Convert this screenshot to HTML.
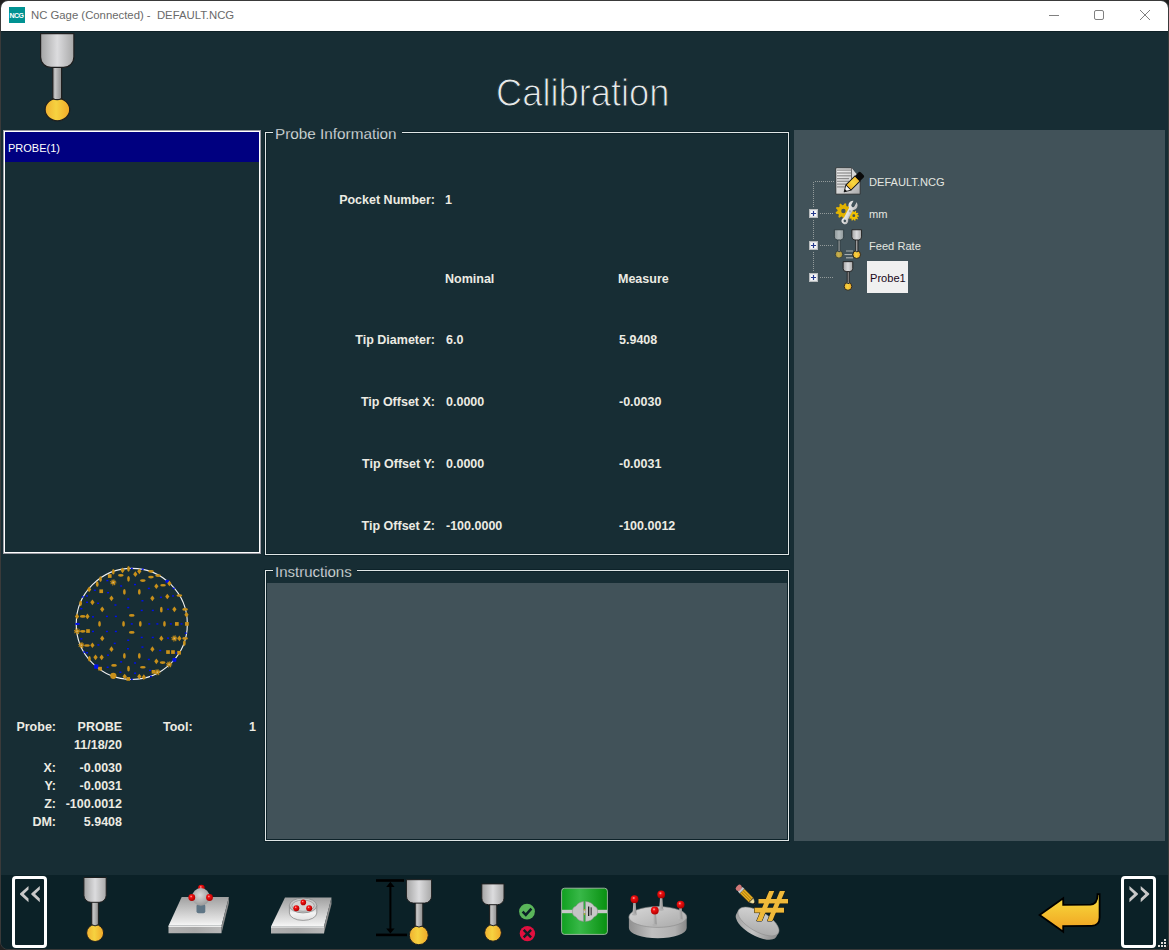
<!DOCTYPE html>
<html><head><meta charset="utf-8">
<style>
*{margin:0;padding:0;box-sizing:border-box}
html,body{width:1169px;height:950px;overflow:hidden;background:#202020}
body{position:relative;font-family:"Liberation Sans",sans-serif}
.a{position:absolute}
svg{position:absolute;overflow:visible}
#win{position:absolute;left:0;top:0;width:1169px;height:950px;background:#172d34;border:1px solid #3a3a3a;border-radius:8px;overflow:hidden}
#title{position:absolute;left:0;top:0;width:1167px;height:30px;background:#fff}
.t{position:absolute;white-space:nowrap;line-height:1}
.b{font-weight:bold;font-size:12.5px;color:#ecebe3}
.r{text-align:right}
.tr{font-size:11.5px;color:#e4e6e0;transform:scaleX(0.965);transform-origin:0 0}
</style></head><body>
<div id="win">
<div id="title">
  <div class="a" style="left:8px;top:6px;width:16px;height:16px;background:#009292;color:#fff;font:bold 7px 'Liberation Sans',sans-serif;text-align:center;line-height:18px;letter-spacing:-0.6px;text-indent:-1px">NCG</div>
  <div class="t" style="left:30px;top:9px;font-size:11.5px;color:#6a6a6a;transform:scaleX(0.985);transform-origin:0 0">NC Gage (Connected) -&nbsp; DEFAULT.NCG</div>
  <svg style="left:-1px;top:-1px" width="1167" height="30">
   <line x1="1049" y1="15.5" x2="1059" y2="15.5" stroke="#808080" stroke-width="1"/>
   <rect x="1094.5" y="10.5" width="9" height="9" rx="1.5" fill="none" stroke="#808080" stroke-width="1"/>
   <path d="M1140 10 L1150 20 M1150 10 L1140 20" stroke="#808080" stroke-width="1"/>
  </svg>
 </div>
 <div class="a" style="left:0;top:30px;width:1167px;height:1px;background:#0e2026"></div>
<div class="t" style="left:495px;top:73px;font-size:38px;color:#e6eaea;-webkit-text-stroke:1px #172d34;transform:scaleX(0.955);transform-origin:0 0">Calibration</div>
<svg style="left:-1px;top:-1px" width="1" height="1">
 <defs>
  <linearGradient id="ph1" x1="0" x2="1" y1="0" y2="0"><stop offset="0" stop-color="#a4a4a4"/><stop offset="0.5" stop-color="#dcdcde"/><stop offset="1" stop-color="#a8a8a8"/></linearGradient>
  <linearGradient id="ps1" x1="0" x2="1" y1="0" y2="0"><stop offset="0" stop-color="#a4a4a4"/><stop offset="0.3" stop-color="#c4c4c4"/><stop offset="1" stop-color="#8c8c8c"/></linearGradient>
  <linearGradient id="pb1" x1="0" x2="1" y1="0" y2="0"><stop offset="0" stop-color="#f0b030"/><stop offset="0.45" stop-color="#f6d240"/><stop offset="1" stop-color="#f0a828"/></linearGradient>
 </defs>
 <ellipse cx="57.4" cy="109.6" rx="12.3" ry="11.200000000000001" fill="url(#pb1)" stroke="#1e1e1e" stroke-width="1.2"/>
 <path d="M52.800000000000004 66 L61.6 66 L61.6 98.39999999999999 Q57.2 101.0 52.800000000000004 98.39999999999999 Z" fill="url(#ps1)" stroke="#1e1e1e" stroke-width="1.2"/>
 <path d="M40.6 33.6 L73.9 33.6 L73.9 57 A10.4 10.4 0 0 1 63.5 67.4 L51 67.4 A10.4 10.4 0 0 1 40.6 57 Z" fill="url(#ph1)" stroke="#1e1e1e" stroke-width="1.2"/>
</svg>
<div class="a" style="left:2px;top:129px;width:258px;height:424px;border:1px solid #9c9ca4"></div><div class="a" style="left:3px;top:130px;width:256px;height:422px;border:1px solid #fff"></div>
 <div class="a" style="left:4px;top:131px;width:254px;height:30px;background:#000080"></div>
 <div class="t" style="left:7px;top:142px;font-size:11px;color:#fff">PROBE(1)</div>
<div class="a" style="left:264px;top:131px;width:524px;height:423px;border:1px solid #e0e6e6;box-shadow:0 0 0 1px #0d2229, inset 0 0 0 1px #0d2229"></div>
 <div class="a" style="left:272px;top:122px;width:129px;height:16px;background:#172d34"></div>
 <div class="t" style="left:274px;top:125px;font-size:15.3px;color:#e6ecec;-webkit-text-stroke:0.25px #172d34">Probe Information</div>
 <div class="a" style="left:264px;top:569px;width:524px;height:271px;border:1px solid #e0e6e6;box-shadow:0 0 0 1px #0d2229, inset 0 0 0 1px #0d2229"></div>
 <div class="a" style="left:266px;top:582px;width:520px;height:256px;background:#415259"></div>
 <div class="a" style="left:272px;top:562px;width:84px;height:16px;background:#172d34"></div>
 <div class="t" style="left:274px;top:563px;font-size:15px;color:#e6ecec;-webkit-text-stroke:0.25px #172d34">Instructions</div>
 <div class="a" style="left:793px;top:129px;width:371px;height:711px;background:#415259"></div>
<div class="t b r" style="left:134px;width:300px;top:193px;">Pocket Number:</div>
<div class="t b" style="left:444px;top:193px;">1</div>
<div class="t b" style="left:444px;top:272px;">Nominal</div>
<div class="t b" style="left:617px;top:272px;">Measure</div>
<div class="t b r" style="left:134px;width:300px;top:333px;">Tip Diameter:</div>
<div class="t b" style="left:445px;top:333px;">6.0</div>
<div class="t b" style="left:618px;top:333px;">5.9408</div>
<div class="t b r" style="left:134px;width:300px;top:395px;">Tip Offset X:</div>
<div class="t b" style="left:445px;top:395px;">0.0000</div>
<div class="t b" style="left:618px;top:395px;">-0.0030</div>
<div class="t b r" style="left:134px;width:300px;top:457px;">Tip Offset Y:</div>
<div class="t b" style="left:445px;top:457px;">0.0000</div>
<div class="t b" style="left:618px;top:457px;">-0.0031</div>
<div class="t b r" style="left:134px;width:300px;top:519px;">Tip Offset Z:</div>
<div class="t b" style="left:445px;top:519px;">-100.0000</div>
<div class="t b" style="left:618px;top:519px;">-100.0012</div>
<div class="t b r" style="left:-245px;width:300px;top:720px;">Probe:</div>
<div class="t b r" style="left:-179px;width:300px;top:720px;">PROBE</div>
<div class="t b" style="left:162px;top:720px;">Tool:</div>
<div class="t b r" style="left:-45px;width:300px;top:720px;">1</div>
<div class="t b r" style="left:-179px;width:300px;top:738px;">11/18/20</div>
<div class="t b r" style="left:-245px;width:300px;top:761px;">X:</div>
<div class="t b r" style="left:-179px;width:300px;top:761px;">-0.0030</div>
<div class="t b r" style="left:-245px;width:300px;top:779px;">Y:</div>
<div class="t b r" style="left:-179px;width:300px;top:779px;">-0.0031</div>
<div class="t b r" style="left:-245px;width:300px;top:797px;">Z:</div>
<div class="t b r" style="left:-179px;width:300px;top:797px;">-100.0012</div>
<div class="t b r" style="left:-245px;width:300px;top:815px;">DM:</div>
<div class="t b r" style="left:-179px;width:300px;top:815px;">5.9408</div>
<svg style="left:-1px;top:-1px" width="1" height="1">
 <g fill="#939b9b"><rect x="813" y="182" width="1" height="1"/><rect x="813" y="184" width="1" height="1"/><rect x="813" y="186" width="1" height="1"/><rect x="813" y="188" width="1" height="1"/><rect x="813" y="190" width="1" height="1"/><rect x="813" y="192" width="1" height="1"/><rect x="813" y="194" width="1" height="1"/><rect x="813" y="196" width="1" height="1"/><rect x="813" y="198" width="1" height="1"/><rect x="813" y="200" width="1" height="1"/><rect x="813" y="202" width="1" height="1"/><rect x="813" y="204" width="1" height="1"/><rect x="813" y="206" width="1" height="1"/><rect x="813" y="220" width="1" height="1"/><rect x="813" y="222" width="1" height="1"/><rect x="813" y="224" width="1" height="1"/><rect x="813" y="226" width="1" height="1"/><rect x="813" y="228" width="1" height="1"/><rect x="813" y="230" width="1" height="1"/><rect x="813" y="232" width="1" height="1"/><rect x="813" y="234" width="1" height="1"/><rect x="813" y="236" width="1" height="1"/><rect x="813" y="238" width="1" height="1"/><rect x="813" y="252" width="1" height="1"/><rect x="813" y="254" width="1" height="1"/><rect x="813" y="256" width="1" height="1"/><rect x="813" y="258" width="1" height="1"/><rect x="813" y="260" width="1" height="1"/><rect x="813" y="262" width="1" height="1"/><rect x="813" y="264" width="1" height="1"/><rect x="813" y="266" width="1" height="1"/><rect x="813" y="268" width="1" height="1"/><rect x="813" y="270" width="1" height="1"/><rect x="815" y="181" width="1" height="1"/><rect x="817" y="181" width="1" height="1"/><rect x="819" y="181" width="1" height="1"/><rect x="821" y="181" width="1" height="1"/><rect x="823" y="181" width="1" height="1"/><rect x="825" y="181" width="1" height="1"/><rect x="827" y="181" width="1" height="1"/><rect x="829" y="181" width="1" height="1"/><rect x="831" y="181" width="1" height="1"/><rect x="833" y="181" width="1" height="1"/><rect x="820" y="213" width="1" height="1"/><rect x="822" y="213" width="1" height="1"/><rect x="824" y="213" width="1" height="1"/><rect x="826" y="213" width="1" height="1"/><rect x="828" y="213" width="1" height="1"/><rect x="830" y="213" width="1" height="1"/><rect x="832" y="213" width="1" height="1"/><rect x="820" y="245" width="1" height="1"/><rect x="822" y="245" width="1" height="1"/><rect x="824" y="245" width="1" height="1"/><rect x="826" y="245" width="1" height="1"/><rect x="828" y="245" width="1" height="1"/><rect x="830" y="245" width="1" height="1"/><rect x="832" y="245" width="1" height="1"/><rect x="820" y="277" width="1" height="1"/><rect x="822" y="277" width="1" height="1"/><rect x="824" y="277" width="1" height="1"/><rect x="826" y="277" width="1" height="1"/><rect x="828" y="277" width="1" height="1"/><rect x="830" y="277" width="1" height="1"/><rect x="832" y="277" width="1" height="1"/></g>
 <rect x="809.5" y="209.5" width="8" height="8" fill="#fafafa" stroke="#b8bcbe" stroke-width="1"/>
 <rect x="810.5" y="210.5" width="6" height="6" fill="none" stroke="#e6e8ea" stroke-width="1"/>
 <path d="M811 213.5 L816 213.5 M813.5 211 L813.5 216" stroke="#23388c" stroke-width="1.2"/>
<rect x="809.5" y="241.5" width="8" height="8" fill="#fafafa" stroke="#b8bcbe" stroke-width="1"/>
 <rect x="810.5" y="242.5" width="6" height="6" fill="none" stroke="#e6e8ea" stroke-width="1"/>
 <path d="M811 245.5 L816 245.5 M813.5 243 L813.5 248" stroke="#23388c" stroke-width="1.2"/>
<rect x="809.5" y="273.5" width="8" height="8" fill="#fafafa" stroke="#b8bcbe" stroke-width="1"/>
 <rect x="810.5" y="274.5" width="6" height="6" fill="none" stroke="#e6e8ea" stroke-width="1"/>
 <path d="M811 277.5 L816 277.5 M813.5 275 L813.5 280" stroke="#23388c" stroke-width="1.2"/>

</svg>
<svg style="left:-1px;top:-1px" width="1" height="1">
 <defs><linearGradient id="doc" x1="0" x2="1" y1="0" y2="1"><stop offset="0" stop-color="#f4f4f4"/><stop offset="0.6" stop-color="#d0d0d0"/><stop offset="1" stop-color="#a8a8a8"/></linearGradient>
 <linearGradient id="pen" x1="0" x2="1" y1="0" y2="0"><stop offset="0" stop-color="#f0b020"/><stop offset="0.5" stop-color="#f8d840"/><stop offset="1" stop-color="#f0b830"/></linearGradient></defs>
 <path d="M835.8 167.8 L851.5 167.8 L860.2 178.5 L860.2 194.2 L835.8 194.2 Z" fill="url(#doc)" stroke="#2e3436" stroke-width="1"/>
 <path d="M851.5 167.8 L851.5 178.5 L860.2 178.5" fill="#d8d8d8" stroke="#505050" stroke-width="0.8"/>
 <rect x="837" y="169.5" width="14" height="1.2" fill="#8c8c8c"/><rect x="837" y="172.4" width="14" height="1.2" fill="#8c8c8c"/><rect x="837" y="175.2" width="14" height="1.2" fill="#8c8c8c"/><rect x="837" y="178" width="12" height="1.2" fill="#8c8c8c"/><rect x="837" y="180.7" width="12" height="1.2" fill="#8c8c8c"/><rect x="837" y="183.5" width="12" height="1.2" fill="#8c8c8c"/><rect x="837" y="186.3" width="12" height="1.2" fill="#8c8c8c"/>
 <g transform="translate(853 183) rotate(-45)">
  <rect x="-6.5" y="-3.6" width="13" height="7.2" fill="url(#pen)" stroke="#111" stroke-width="1"/>
  <rect x="6" y="-3.6" width="7" height="7.2" rx="1.5" fill="#0a0a0a"/>
  <path d="M-6.5 -3.6 L-12.5 0 L-6.5 3.6 Z" fill="#f4f4f4" stroke="#111" stroke-width="0.8"/>
  <path d="M-10 -1.5 L-13 0 L-10 1.5 Z" fill="#111"/>
 </g>
</svg>
<svg style="left:-1px;top:-1px" width="1" height="1">
 <path d="M851.30,211.00 L851.18,212.37 L848.94,213.02 L848.51,213.95 L849.45,216.08 L848.48,217.05 L846.35,216.11 L845.42,216.54 L844.77,218.78 L843.40,218.90 L842.38,216.81 L841.38,216.54 L839.45,217.84 L838.32,217.05 L838.88,214.79 L838.29,213.95 L835.98,213.70 L835.62,212.37 L837.50,211.00 L837.59,209.98 L835.98,208.30 L836.56,207.05 L838.88,207.21 L839.61,206.48 L839.45,204.16 L840.70,203.58 L842.38,205.19 L843.40,205.10 L844.77,203.22 L846.10,203.58 L846.35,205.89 L847.19,206.48 L849.45,205.92 L850.24,207.05 L848.94,208.98 L849.21,209.98 Z M845.6 211 A2.2 2.2 0 1 0 841.1999999999999 211 A2.2 2.2 0 1 0 845.6 211 Z" fill="#e2b300" fill-rule="evenodd"/>
 <path d="M859.00,215.70 L858.94,216.51 L857.41,216.87 L857.19,217.43 L858.01,218.76 L857.48,219.38 L856.03,218.77 L855.53,219.09 L855.41,220.65 L854.61,220.84 L853.80,219.50 L853.21,219.45 L852.19,220.65 L851.44,220.33 L851.57,218.77 L851.11,218.39 L849.59,218.76 L849.17,218.06 L850.19,216.87 L850.05,216.29 L848.60,215.70 L848.66,214.89 L850.19,214.53 L850.41,213.97 L849.59,212.64 L850.12,212.02 L851.57,212.63 L852.07,212.31 L852.19,210.75 L852.99,210.56 L853.80,211.90 L854.39,211.95 L855.41,210.75 L856.16,211.07 L856.03,212.63 L856.49,213.01 L858.01,212.64 L858.43,213.34 L857.41,214.53 L857.55,215.11 Z M855.1999999999999 215.7 A1.4 1.4 0 1 0 852.4 215.7 A1.4 1.4 0 1 0 855.1999999999999 215.7 Z" fill="#f0c000" fill-rule="evenodd"/>
 <defs><linearGradient id="wr" x1="0" x2="1" y1="0" y2="0"><stop offset="0" stop-color="#e4e4e4"/><stop offset="0.6" stop-color="#d8d8d8"/><stop offset="1" stop-color="#b8b8b8"/></linearGradient></defs>
 <g transform="translate(849 213) rotate(27.7)">
  <rect x="-2.3" y="-6" width="4.6" height="15" fill="url(#wr)"/>
  <circle cx="0" cy="8.9" r="3.3" fill="url(#wr)"/>
  <circle cx="0" cy="9" r="1.3" fill="#415259"/>
  <circle cx="0" cy="-8.6" r="4.6" fill="url(#wr)"/>
  <path d="M-1.7 -14 L1.7 -14 L1.7 -8.6 A1.7 1.7 0 0 1 -1.7 -8.6 Z" fill="#415259"/>
  <circle cx="0" cy="-2" r="1.1" fill="#a8a8a8"/>
 </g>
</svg>
<svg style="left:-1px;top:-1px" width="1" height="1">
 <defs>
  <linearGradient id="ph2" x1="0" x2="1" y1="0" y2="0"><stop offset="0" stop-color="#8e9799"/><stop offset="0.5" stop-color="#b4bcbe"/><stop offset="1" stop-color="#8e9799"/></linearGradient>
  <linearGradient id="ps2" x1="0" x2="1" y1="0" y2="0"><stop offset="0" stop-color="#8e9799"/><stop offset="0.3" stop-color="#a8b0b2"/><stop offset="1" stop-color="#8c8c8c"/></linearGradient>
  <linearGradient id="pb2" x1="0" x2="1" y1="0" y2="0"><stop offset="0" stop-color="#b09838"/><stop offset="0.45" stop-color="#c8b050"/><stop offset="1" stop-color="#a89030"/></linearGradient>
 </defs>
 <ellipse cx="839" cy="254.4" rx="3.75" ry="3.75" fill="url(#pb2)" stroke="#2d3a3e" stroke-width="0.9"/>
 <path d="M838.0500000000001 238.4 L840.15 238.4 L840.15 250.8 Q839.1 253.4 838.0500000000001 250.8 Z" fill="url(#ps2)" stroke="#2d3a3e" stroke-width="0.9"/>
 <path d="M834.35 229.75 L843.65 229.75 L843.65 236.9 A3.05 3.05 0 0 1 840.6 239.95000000000002 L837.4 239.95000000000002 A3.05 3.05 0 0 1 834.35 236.9 Z" fill="url(#ph2)" stroke="#2d3a3e" stroke-width="0.9"/>
</svg>
<svg style="left:-1px;top:-1px" width="1" height="1">
 <defs>
  <linearGradient id="ph3" x1="0" x2="1" y1="0" y2="0"><stop offset="0" stop-color="#a4a4a4"/><stop offset="0.5" stop-color="#dcdcde"/><stop offset="1" stop-color="#a8a8a8"/></linearGradient>
  <linearGradient id="ps3" x1="0" x2="1" y1="0" y2="0"><stop offset="0" stop-color="#a4a4a4"/><stop offset="0.3" stop-color="#c4c4c4"/><stop offset="1" stop-color="#8c8c8c"/></linearGradient>
  <linearGradient id="pb3" x1="0" x2="1" y1="0" y2="0"><stop offset="0" stop-color="#f0b030"/><stop offset="0.45" stop-color="#f6d240"/><stop offset="1" stop-color="#f0a828"/></linearGradient>
 </defs>
 <ellipse cx="856.7" cy="254.6" rx="3.8499999999999996" ry="3.8499999999999996" fill="url(#pb3)" stroke="#1e1e1e" stroke-width="0.9"/>
 <path d="M855.75 238.4 L857.9499999999999 238.4 L857.9499999999999 250.89999999999998 Q856.8499999999999 253.49999999999997 855.75 250.89999999999998 Z" fill="url(#ps3)" stroke="#1e1e1e" stroke-width="0.9"/>
 <path d="M851.85 229.75 L861.55 229.75 L861.55 236.9 A3.05 3.05 0 0 1 858.5 239.95000000000002 L854.9 239.95000000000002 A3.05 3.05 0 0 1 851.85 236.9 Z" fill="url(#ph3)" stroke="#1e1e1e" stroke-width="0.9"/>
</svg>
<svg style="left:-1px;top:-1px" width="1" height="1"><g stroke="#a9b0b0" stroke-width="1.2">
 <line x1="846" y1="251" x2="853" y2="251"/><line x1="844.5" y1="254.5" x2="852" y2="254.5"/><line x1="846" y1="257.8" x2="853" y2="257.8"/></g></svg>
<svg style="left:-1px;top:-1px" width="1" height="1">
 <defs>
  <linearGradient id="ph4" x1="0" x2="1" y1="0" y2="0"><stop offset="0" stop-color="#a4a4a4"/><stop offset="0.5" stop-color="#dcdcde"/><stop offset="1" stop-color="#a8a8a8"/></linearGradient>
  <linearGradient id="ps4" x1="0" x2="1" y1="0" y2="0"><stop offset="0" stop-color="#a4a4a4"/><stop offset="0.3" stop-color="#c4c4c4"/><stop offset="1" stop-color="#8c8c8c"/></linearGradient>
  <linearGradient id="pb4" x1="0" x2="1" y1="0" y2="0"><stop offset="0" stop-color="#f0b030"/><stop offset="0.45" stop-color="#f6d240"/><stop offset="1" stop-color="#f0a828"/></linearGradient>
 </defs>
 <ellipse cx="848" cy="286.4" rx="3.8499999999999996" ry="3.8499999999999996" fill="url(#pb4)" stroke="#1e1e1e" stroke-width="0.9"/>
 <path d="M847.25 270 L849.15 270 L849.15 282.7 Q848.2 285.29999999999995 847.25 282.7 Z" fill="url(#ps4)" stroke="#1e1e1e" stroke-width="0.9"/>
 <path d="M843.1500000000001 261.65 L852.75 261.65 L852.75 268.5 A3.05 3.05 0 0 1 849.7 271.55 L846.2 271.55 A3.05 3.05 0 0 1 843.1500000000001 268.5 Z" fill="url(#ph4)" stroke="#1e1e1e" stroke-width="0.9"/>
</svg>
<div class="a" style="left:866px;top:260px;width:41px;height:32px;background:#f0f0f0"></div>
<div class="t tr" style="left:868px;top:176px;">DEFAULT.NCG</div>
<div class="t tr" style="left:868px;top:208px;">mm</div>
<div class="t tr" style="left:868px;top:240px;">Feed Rate</div>
<div class="t tr" style="left:869px;top:272px;color:#180818">Probe1</div>
<svg style="left:59px;top:554px" width="140" height="135" viewBox="0 0 985 950">
 <circle cx="505" cy="485" r="391" fill="none" stroke="#f0f0f0" stroke-width="8"/>
 <g fill="#0010f0"><rect x="498" y="90" width="14" height="10"/><rect x="575" y="95" width="14" height="10"/><rect x="750" y="180" width="14" height="10"/><rect x="793" y="230" width="14" height="10"/><rect x="326" y="175" width="14" height="10"/><rect x="423" y="213" width="14" height="10"/><rect x="521" y="203" width="14" height="10"/><rect x="618" y="230" width="14" height="10"/><rect x="238" y="243" width="14" height="10"/><rect x="331" y="260" width="14" height="10"/><rect x="183" y="283" width="14" height="10"/><rect x="153" y="290" width="14" height="10"/><rect x="703" y="293" width="14" height="10"/><rect x="788" y="283" width="14" height="10"/><rect x="183" y="328" width="14" height="10"/><rect x="261" y="335" width="14" height="10"/><rect x="473" y="305" width="14" height="10"/><rect x="573" y="317" width="14" height="10"/><rect x="383" y="347" width="14" height="10"/><rect x="473" y="365" width="14" height="10"/><rect x="568" y="385" width="14" height="10"/><rect x="646" y="385" width="14" height="10"/><rect x="143" y="373" width="14" height="10"/><rect x="753" y="377" width="14" height="10"/><rect x="225" y="430" width="14" height="10"/><rect x="323" y="427" width="14" height="10"/><rect x="386" y="427" width="14" height="10"/><rect x="498" y="480" width="14" height="10"/><rect x="621" y="480" width="14" height="10"/><rect x="678" y="480" width="14" height="10"/><rect x="773" y="480" width="14" height="10"/><rect x="848" y="480" width="14" height="10"/><rect x="225" y="533" width="14" height="10"/><rect x="323" y="533" width="14" height="10"/><rect x="386" y="533" width="14" height="10"/><rect x="143" y="585" width="14" height="10"/><rect x="568" y="575" width="14" height="10"/><rect x="646" y="575" width="14" height="10"/><rect x="753" y="580" width="14" height="10"/><rect x="878" y="545" width="14" height="10"/><rect x="263" y="628" width="14" height="10"/><rect x="378" y="617" width="14" height="10"/><rect x="473" y="595" width="14" height="10"/><rect x="573" y="643" width="14" height="10"/><rect x="471" y="655" width="14" height="10"/><rect x="163" y="678" width="14" height="10"/><rect x="183" y="683" width="14" height="10"/><rect x="331" y="700" width="14" height="10"/><rect x="698" y="667" width="14" height="10"/><rect x="813" y="685" width="14" height="10"/><rect x="423" y="747" width="14" height="10"/><rect x="521" y="755" width="14" height="10"/><rect x="618" y="730" width="14" height="10"/><rect x="328" y="785" width="14" height="10"/><rect x="418" y="820" width="14" height="10"/><rect x="521" y="827" width="14" height="10"/><rect x="626" y="807" width="14" height="10"/><rect x="498" y="870" width="14" height="10"/><rect x="633" y="850" width="14" height="10"/><rect x="108" y="478" width="30" height="14"/><rect x="792" y="725" width="26" height="26"/><rect x="240" y="770" width="30" height="30"/><rect x="742" y="175" width="24" height="20"/><rect x="295" y="860" width="0" height="0"/></g>
 <g fill="#c8901a"><ellipse cx="375" cy="118" rx="9.5" ry="20"/><path d="M440 88 L455 108 L440 128 L425 108 Z"/><ellipse cx="482" cy="97" rx="9.5" ry="20"/><path d="M558 95 L573 115 L558 135 L543 115 Z"/><path d="M530 115 L545 135 L530 155 L515 135 Z"/><ellipse cx="640" cy="115" rx="20" ry="9.5"/><ellipse cx="690" cy="145" rx="20" ry="9.5"/><ellipse cx="640" cy="155" rx="20" ry="9.5"/><rect x="337" y="135" width="26" height="26"/><ellipse cx="285" cy="170" rx="9.5" ry="20"/><ellipse cx="262" cy="205" rx="9.5" ry="20"/><circle cx="375" cy="193" r="15"/><circle cx="375" cy="193" r="18" fill="none" stroke="#c8901a" stroke-width="8" stroke-dasharray="7 7"/><circle cx="375" cy="193" r="5" fill="#cdbb90"/><ellipse cx="428" cy="143" rx="20" ry="9.5"/><ellipse cx="482" cy="168" rx="9.5" ry="20"/><ellipse cx="583" cy="180" rx="20" ry="9.5"/><path d="M678 200 L693 220 L678 240 L663 220 Z"/><ellipse cx="725" cy="213" rx="20" ry="9.5"/><path d="M770 180 L785 200 L770 220 L755 200 Z"/><path d="M205 222 L220 242 L205 262 L190 242 Z"/><rect x="277" y="242" width="26" height="26"/><ellipse cx="453" cy="260" rx="9.5" ry="20"/><ellipse cx="558" cy="260" rx="9.5" ry="20"/><path d="M362 285 L377 305 L362 325 L347 305 Z"/><path d="M650 285 L665 305 L650 325 L635 305 Z"/><path d="M755 272 L770 292 L755 312 L740 292 Z"/><ellipse cx="840" cy="285" rx="20" ry="9.5"/><ellipse cx="145" cy="340" rx="9.5" ry="20"/><path d="M228 313 L243 333 L228 353 L213 333 Z"/><path d="M297 362 L312 382 L297 402 L282 382 Z"/><ellipse cx="505" cy="425" rx="20" ry="9.5"/><ellipse cx="713" cy="385" rx="9.5" ry="20"/><path d="M805 362 L820 382 L805 402 L790 382 Z"/><ellipse cx="880" cy="383" rx="20" ry="9.5"/><path d="M890 400 L905 420 L890 440 L875 420 Z"/><path d="M120 412 L135 432 L120 452 L105 432 Z"/><ellipse cx="160" cy="432" rx="20" ry="9.5"/><path d="M193 412 L208 432 L193 452 L178 432 Z"/><ellipse cx="278" cy="485" rx="9.5" ry="20"/><ellipse cx="447" cy="485" rx="9.5" ry="20"/><ellipse cx="565" cy="485" rx="9.5" ry="20"/><ellipse cx="735" cy="485" rx="9.5" ry="20"/><rect x="809" y="472" width="26" height="26"/><rect x="880" y="472" width="26" height="26"/><circle cx="120" cy="537" r="15"/><circle cx="120" cy="537" r="18" fill="none" stroke="#c8901a" stroke-width="8" stroke-dasharray="7 7"/><circle cx="120" cy="537" r="5" fill="#cdbb90"/><ellipse cx="160" cy="537" rx="20" ry="9.5"/><rect x="184" y="522" width="26" height="26"/><ellipse cx="505" cy="545" rx="20" ry="9.5"/><path d="M297 567 L312 587 L297 607 L282 587 Z"/><path d="M713 567 L728 587 L713 607 L698 587 Z"/><circle cx="805" cy="587" r="15"/><circle cx="805" cy="587" r="18" fill="none" stroke="#c8901a" stroke-width="8" stroke-dasharray="7 7"/><circle cx="805" cy="587" r="5" fill="#cdbb90"/><path d="M840 567 L855 587 L840 607 L825 587 Z"/><ellipse cx="880" cy="587" rx="20" ry="9.5"/><ellipse cx="875" cy="620" rx="9.5" ry="20"/><circle cx="150" cy="635" r="15"/><circle cx="150" cy="635" r="18" fill="none" stroke="#c8901a" stroke-width="8" stroke-dasharray="7 7"/><circle cx="150" cy="635" r="5" fill="#cdbb90"/><ellipse cx="190" cy="637" rx="20" ry="9.5"/><path d="M228 615 L243 635 L228 655 L213 635 Z"/><path d="M362 643 L377 663 L362 683 L347 663 Z"/><path d="M650 643 L665 663 L650 683 L635 663 Z"/><rect x="747" y="670" width="26" height="26"/><rect x="782" y="670" width="26" height="26"/><rect x="825" y="675" width="26" height="26"/><ellipse cx="207" cy="730" rx="9.5" ry="20"/><path d="M250 700 L265 720 L250 740 L235 720 Z"/><path d="M293 700 L308 720 L293 740 L278 720 Z"/><ellipse cx="453" cy="710" rx="9.5" ry="20"/><ellipse cx="558" cy="710" rx="9.5" ry="20"/><path d="M678 728 L693 748 L678 768 L663 748 Z"/><ellipse cx="722" cy="757" rx="20" ry="9.5"/><circle cx="768" cy="770" r="15"/><circle cx="768" cy="770" r="18" fill="none" stroke="#c8901a" stroke-width="8" stroke-dasharray="7 7"/><circle cx="768" cy="770" r="5" fill="#cdbb90"/><ellipse cx="380" cy="777" rx="20" ry="9.5"/><ellipse cx="583" cy="790" rx="20" ry="9.5"/><ellipse cx="482" cy="800" rx="9.5" ry="20"/><rect x="269" y="787" width="26" height="26"/><circle cx="685" cy="825" r="15"/><circle cx="685" cy="825" r="18" fill="none" stroke="#c8901a" stroke-width="8" stroke-dasharray="7 7"/><circle cx="685" cy="825" r="5" fill="#cdbb90"/><rect x="645" y="809" width="26" height="26"/><circle cx="375" cy="850" r="22"/><path d="M455 835 L470 855 L455 875 L440 855 Z"/><rect x="467" y="859" width="26" height="26"/><path d="M558 835 L573 855 L558 875 L543 855 Z"/><path d="M590 840 L605 860 L590 880 L575 860 Z"/></g>
</svg>
<div class="a" style="left:0;top:874px;width:1169px;height:76px;background:#0b2127"></div>
<div class="a" style="left:11px;top:875px;width:35px;height:72px;border:3px solid #fff;border-radius:4px"></div>
<div class="a" style="left:1120px;top:875px;width:35px;height:72px;border:3px solid #fff;border-radius:4px"></div>
<svg style="left:-1px;top:-1px" width="1" height="1"><g fill="#c8c8c8">
 <path d="M28.5 886 L20 893.6 L20 894.6 L28.5 902.3 L28.5 898.6 L23.8 894.1 L28.5 889.6 Z"/>
 <path d="M39.8 886 L31.3 893.6 L31.3 894.6 L39.8 902.3 L39.8 898.6 L35.1 894.1 L39.8 889.6 Z"/>
 <path d="M1129.4 886 L1137.9 893.6 L1137.9 894.6 L1129.4 902.3 L1129.4 898.6 L1134.1 894.1 L1129.4 889.6 Z"/>
 <path d="M1140.7 886 L1149.2 893.6 L1149.2 894.6 L1140.7 902.3 L1140.7 898.6 L1145.4 894.1 L1140.7 889.6 Z"/>
</g>
<g fill="#e0dcd8"><rect x="1164" y="939" width="2" height="2"/><rect x="1161" y="942" width="2" height="2"/><rect x="1164" y="942" width="2" height="2"/><rect x="1158" y="945" width="2" height="2"/><rect x="1161" y="945" width="2" height="2"/><rect x="1164" y="945" width="2" height="2"/></g>
</svg>
<svg style="left:-1px;top:-1px" width="1" height="1">
 <defs>
  <linearGradient id="ph5" x1="0" x2="1" y1="0" y2="0"><stop offset="0" stop-color="#a4a4a4"/><stop offset="0.5" stop-color="#dcdcde"/><stop offset="1" stop-color="#a8a8a8"/></linearGradient>
  <linearGradient id="ps5" x1="0" x2="1" y1="0" y2="0"><stop offset="0" stop-color="#a4a4a4"/><stop offset="0.3" stop-color="#c4c4c4"/><stop offset="1" stop-color="#8c8c8c"/></linearGradient>
  <linearGradient id="pb5" x1="0" x2="1" y1="0" y2="0"><stop offset="0" stop-color="#f0b030"/><stop offset="0.45" stop-color="#f6d240"/><stop offset="1" stop-color="#f0a828"/></linearGradient>
 </defs>
 <ellipse cx="95.1" cy="933" rx="8.5" ry="8.5" fill="url(#pb5)" stroke="#1e1e1e" stroke-width="1"/>
 <path d="M91.7 900.8 L98.4 900.8 L98.4 924.6 Q95.05000000000001 927.2 91.7 924.6 Z" fill="url(#ps5)" stroke="#1e1e1e" stroke-width="1"/>
 <path d="M83.9 877.5 L106.2 877.5 L106.2 895.3 A7.0 7.0 0 0 1 99.2 902.3 L90.9 902.3 A7.0 7.0 0 0 1 83.9 895.3 Z" fill="url(#ph5)" stroke="#1e1e1e" stroke-width="1"/>
</svg>
<svg style="left:-1px;top:-1px" width="1" height="1">
 <defs><linearGradient id="pt6" x1="0" x2="0" y1="0" y2="1"><stop offset="0" stop-color="#a0a0a0"/><stop offset="0.85" stop-color="#e8e8e8"/><stop offset="1" stop-color="#f8f8f8"/></linearGradient>
 <linearGradient id="pf6" x1="0" x2="1" y1="0" y2="0"><stop offset="0" stop-color="#b0b0b0"/><stop offset="0.5" stop-color="#a8a8a8"/><stop offset="1" stop-color="#b8b8b8"/></linearGradient></defs>
 <path d="M181.7 897.1 L228.9 897.1 L221.5 925.8 L168.5 925.8 Z" fill="url(#pt6)"/>
 <path d="M168.5 925.8 L221.5 925.8 L221.5 933.2 L168.5 933.2 Z" fill="url(#pf6)"/>
 <path d="M228.9 897.1 L228.9 903.1 L221.5 933.2 L221.5 925.8 Z" fill="#8c8c8c"/>
 <line x1="168.5" y1="926.3" x2="221.5" y2="926.3" stroke="#fafafa" stroke-width="1"/>
 <defs><radialGradient id="sph" cx="0.45" cy="0.4" r="0.7"><stop offset="0" stop-color="#d8d8d8"/><stop offset="1" stop-color="#909090"/></radialGradient></defs>
 <rect x="196.5" y="904" width="8.8" height="9.3" rx="2" fill="#5f7686"/>
 <defs><radialGradient id="rb7" cx="0.4" cy="0.35" r="0.65"><stop offset="0" stop-color="#ffb0b0"/><stop offset="0.3" stop-color="#f01010"/><stop offset="1" stop-color="#b00000"/></radialGradient></defs><circle cx="201.4" cy="888" r="3.3" fill="url(#rb7)"/>
 <circle cx="200.9" cy="896.9" r="8.8" fill="url(#sph)"/>
 <defs><radialGradient id="rb8" cx="0.4" cy="0.35" r="0.65"><stop offset="0" stop-color="#ffb0b0"/><stop offset="0.3" stop-color="#f01010"/><stop offset="1" stop-color="#b00000"/></radialGradient></defs><circle cx="191.8" cy="897.5" r="3.4" fill="url(#rb8)"/>
 <defs><radialGradient id="rb9" cx="0.4" cy="0.35" r="0.65"><stop offset="0" stop-color="#ffb0b0"/><stop offset="0.3" stop-color="#f01010"/><stop offset="1" stop-color="#b00000"/></radialGradient></defs><circle cx="209.5" cy="897.5" r="3.4" fill="url(#rb9)"/>
</svg>
<svg style="left:-1px;top:-1px" width="1" height="1">
 <defs><linearGradient id="pt10" x1="0" x2="0" y1="0" y2="1"><stop offset="0" stop-color="#a0a0a0"/><stop offset="0.85" stop-color="#e8e8e8"/><stop offset="1" stop-color="#f8f8f8"/></linearGradient>
 <linearGradient id="pf10" x1="0" x2="1" y1="0" y2="0"><stop offset="0" stop-color="#b0b0b0"/><stop offset="0.5" stop-color="#a8a8a8"/><stop offset="1" stop-color="#b8b8b8"/></linearGradient></defs>
 <path d="M285 897.5 L331.5 897.5 L324 926.5 L271 926.5 Z" fill="url(#pt10)"/>
 <path d="M271 926.5 L324 926.5 L324 933.4 L271 933.4 Z" fill="url(#pf10)"/>
 <path d="M331.5 897.5 L331.5 904.0 L324 933.4 L324 926.5 Z" fill="#8c8c8c"/>
 <line x1="271" y1="927.0" x2="324" y2="927.0" stroke="#fafafa" stroke-width="1"/>
 <defs><linearGradient id="ring" x1="0" x2="0" y1="0" y2="1"><stop offset="0" stop-color="#b0b0b0"/><stop offset="0.5" stop-color="#f4f4f4"/><stop offset="1" stop-color="#e0e0e0"/></linearGradient></defs>
 <path d="M289.4 905.5 L289.4 913 A13.7 7.4 0 0 0 316.8 913 L316.8 905.5 Z" fill="url(#ring)" stroke="#8a8a8a" stroke-width="0.8"/>
 <ellipse cx="303.1" cy="905.5" rx="13.7" ry="7.4" fill="#c8c8c8" stroke="#8a8a8a" stroke-width="0.8"/>
 <ellipse cx="303.1" cy="905.7" rx="11.2" ry="5.6" fill="#d4d4d4" stroke="#9a9a9a" stroke-width="0.8"/>
 <defs><radialGradient id="rb11" cx="0.4" cy="0.35" r="0.65"><stop offset="0" stop-color="#ffb0b0"/><stop offset="0.3" stop-color="#f01010"/><stop offset="1" stop-color="#b00000"/></radialGradient></defs><circle cx="303.3" cy="902.4" r="2.8" fill="url(#rb11)"/>
 <defs><radialGradient id="rb12" cx="0.4" cy="0.35" r="0.65"><stop offset="0" stop-color="#ffb0b0"/><stop offset="0.3" stop-color="#f01010"/><stop offset="1" stop-color="#b00000"/></radialGradient></defs><circle cx="296.3" cy="908.2" r="3" fill="url(#rb12)"/>
 <defs><radialGradient id="rb13" cx="0.4" cy="0.35" r="0.65"><stop offset="0" stop-color="#ffb0b0"/><stop offset="0.3" stop-color="#f01010"/><stop offset="1" stop-color="#b00000"/></radialGradient></defs><circle cx="309.2" cy="908.2" r="3" fill="url(#rb13)"/>
</svg>
<svg style="left:-1px;top:-1px" width="1" height="1"><g fill="#000">
 <rect x="376" y="879.2" width="28" height="2.6"/><rect x="376" y="933.6" width="31" height="2.6"/>
 <rect x="389.4" y="884" width="2" height="48"/>
 <path d="M390.4 881.8 L394.6 887 L386.2 887 Z"/><path d="M390.4 933.6 L394.6 928.4 L386.2 928.4 Z"/>
</g></svg>
<svg style="left:-1px;top:-1px" width="1" height="1">
 <defs>
  <linearGradient id="ph14" x1="0" x2="1" y1="0" y2="0"><stop offset="0" stop-color="#a4a4a4"/><stop offset="0.5" stop-color="#dcdcde"/><stop offset="1" stop-color="#a8a8a8"/></linearGradient>
  <linearGradient id="ps14" x1="0" x2="1" y1="0" y2="0"><stop offset="0" stop-color="#a4a4a4"/><stop offset="0.3" stop-color="#c4c4c4"/><stop offset="1" stop-color="#8c8c8c"/></linearGradient>
  <linearGradient id="pb14" x1="0" x2="1" y1="0" y2="0"><stop offset="0" stop-color="#f0b030"/><stop offset="0.45" stop-color="#f6d240"/><stop offset="1" stop-color="#f0a828"/></linearGradient>
 </defs>
 <ellipse cx="418.8" cy="935.2" rx="9.5" ry="9.5" fill="url(#pb14)" stroke="#1e1e1e" stroke-width="1"/>
 <path d="M415.2 901.6 L422.8 901.6 L422.8 925.8000000000001 Q419.0 928.4000000000001 415.2 925.8000000000001 Z" fill="url(#ps14)" stroke="#1e1e1e" stroke-width="1"/>
 <path d="M406.4 879.7 L431.6 879.7 L431.6 896.1 A7.0 7.0 0 0 1 424.6 903.1 L413.4 903.1 A7.0 7.0 0 0 1 406.4 896.1 Z" fill="url(#ph14)" stroke="#1e1e1e" stroke-width="1"/>
</svg>
<svg style="left:-1px;top:-1px" width="1" height="1">
 <defs>
  <linearGradient id="ph15" x1="0" x2="1" y1="0" y2="0"><stop offset="0" stop-color="#a4a4a4"/><stop offset="0.5" stop-color="#dcdcde"/><stop offset="1" stop-color="#a8a8a8"/></linearGradient>
  <linearGradient id="ps15" x1="0" x2="1" y1="0" y2="0"><stop offset="0" stop-color="#a4a4a4"/><stop offset="0.3" stop-color="#c4c4c4"/><stop offset="1" stop-color="#8c8c8c"/></linearGradient>
  <linearGradient id="pb15" x1="0" x2="1" y1="0" y2="0"><stop offset="0" stop-color="#f0b030"/><stop offset="0.45" stop-color="#f6d240"/><stop offset="1" stop-color="#f0a828"/></linearGradient>
 </defs>
 <ellipse cx="493" cy="932.8" rx="8.4" ry="8.4" fill="url(#pb15)" stroke="#1e1e1e" stroke-width="1"/>
 <path d="M489.6 903.2 L496.8 903.2 L496.8 924.5 Q493.20000000000005 927.1 489.6 924.5 Z" fill="url(#ps15)" stroke="#1e1e1e" stroke-width="1"/>
 <path d="M481.8 883.9 L504.0 883.9 L504.0 898.2 A6.5 6.5 0 0 1 497.5 904.7 L488.3 904.7 A6.5 6.5 0 0 1 481.8 898.2 Z" fill="url(#ph15)" stroke="#1e1e1e" stroke-width="1"/>
</svg>
<svg style="left:-1px;top:-1px" width="1" height="1">
 <circle cx="527" cy="911.6" r="7.9" fill="#5ab55a"/>
 <path d="M522.6 911.6 L525.8 914.9 L531.4 908.6" fill="none" stroke="#0b2127" stroke-width="2.5"/>
 <circle cx="527.4" cy="933.6" r="7.7" fill="#e0103f"/>
 <path d="M523.7 929.9 L531.1 937.3 M531.1 929.9 L523.7 937.3" fill="none" stroke="#0b2127" stroke-width="2.4"/>
</svg>
<svg style="left:-1px;top:-1px" width="1" height="1">
 <defs><linearGradient id="grn" x1="0" x2="1" y1="0" y2="0"><stop offset="0" stop-color="#10a020"/><stop offset="0.4" stop-color="#38b848"/><stop offset="1" stop-color="#089010"/></linearGradient></defs>
 <rect x="561.6" y="888.2" width="45.8" height="46.2" rx="3" fill="url(#grn)" stroke="#b8c8b8" stroke-width="0.8"/>
 <rect x="562" y="909.8" width="45" height="3.4" fill="#c8c8c8"/>
 <path d="M583.5 901.5 L583.5 921.5 Q578 921 576 917 Q572.5 915.5 572.5 913 L572.5 910 Q572.5 907.5 576 906 Q578 902 583.5 901.5 Z" fill="#c4c4c4" stroke="#888" stroke-width="0.5"/>
 <path d="M585.5 901.5 L585.5 921.5 Q592 921 594 917 Q597.5 915.5 597.5 913 L597.5 910 Q597.5 907.5 594 906 Q592 902 585.5 901.5 Z" fill="#c8c8c8" stroke="#888" stroke-width="0.5"/>
 <rect x="588" y="906.5" width="1.3" height="9.5" fill="#222"/><rect x="590.6" y="907.3" width="1.1" height="8" fill="#333"/>
 <rect x="583.9" y="909" width="1.3" height="1.6" fill="#c0a030"/><rect x="583.9" y="913.2" width="1.3" height="1.6" fill="#c0a030"/>
</svg>
<svg style="left:-1px;top:-1px" width="1" height="1">
 <defs><linearGradient id="dsk" x1="0" x2="1" y1="0" y2="0"><stop offset="0" stop-color="#909090"/><stop offset="0.4" stop-color="#c0c0c0"/><stop offset="0.8" stop-color="#b0b0b0"/><stop offset="1" stop-color="#888"/></linearGradient>
 <linearGradient id="dtop" x1="0" x2="1" y1="0" y2="1"><stop offset="0" stop-color="#d8d8d8"/><stop offset="1" stop-color="#a8a8a8"/></linearGradient>
 <linearGradient id="pin" x1="0" x2="1"><stop offset="0" stop-color="#c0c0c0"/><stop offset="1" stop-color="#909090"/></linearGradient></defs>
 <path d="M628.9 917 L628.9 927.9 A28.9 10.4 0 0 0 686.7 927.9 L686.7 917 Z" fill="url(#dsk)"/>
 <ellipse cx="657.8" cy="917" rx="28.9" ry="10.4" fill="url(#dtop)" stroke="#8a8a8a" stroke-width="0.6"/>
 <path d="M633.4 901.2 L635.6 901.2 L636.5 914.5 L632.5 914.5 Z" fill="url(#pin)"/><ellipse cx="634.5" cy="914.5" rx="2.6" ry="1.1" fill="#b0b0b0"/><defs><radialGradient id="rb16" cx="0.4" cy="0.35" r="0.65"><stop offset="0" stop-color="#ffb0b0"/><stop offset="0.3" stop-color="#f01010"/><stop offset="1" stop-color="#b00000"/></radialGradient></defs><circle cx="634.5" cy="899.2" r="3.9" fill="url(#rb16)"/><path d="M660.1 896.4 L662.3000000000001 896.4 L663.2 909.7 L659.2 909.7 Z" fill="url(#pin)"/><ellipse cx="661.2" cy="909.7" rx="2.6" ry="1.1" fill="#b0b0b0"/><defs><radialGradient id="rb17" cx="0.4" cy="0.35" r="0.65"><stop offset="0" stop-color="#ffb0b0"/><stop offset="0.3" stop-color="#f01010"/><stop offset="1" stop-color="#b00000"/></radialGradient></defs><circle cx="661.2" cy="894.4" r="3.9" fill="url(#rb17)"/><path d="M679.5 906.6 L681.7 906.6 L682.6 920 L678.6 920 Z" fill="url(#pin)"/><ellipse cx="680.6" cy="920" rx="2.6" ry="1.1" fill="#b0b0b0"/><defs><radialGradient id="rb18" cx="0.4" cy="0.35" r="0.65"><stop offset="0" stop-color="#ffb0b0"/><stop offset="0.3" stop-color="#f01010"/><stop offset="1" stop-color="#b00000"/></radialGradient></defs><circle cx="680.6" cy="904.6" r="3.9" fill="url(#rb18)"/><path d="M653.6999999999999 912.5 L655.9 912.5 L656.8 925 L652.8 925 Z" fill="url(#pin)"/><ellipse cx="654.8" cy="925" rx="2.6" ry="1.1" fill="#b0b0b0"/><defs><radialGradient id="rb19" cx="0.4" cy="0.35" r="0.65"><stop offset="0" stop-color="#ffb0b0"/><stop offset="0.3" stop-color="#f01010"/><stop offset="1" stop-color="#b00000"/></radialGradient></defs><circle cx="654.8" cy="910.5" r="3.9" fill="url(#rb19)"/>
</svg>
<svg style="left:-1px;top:-1px" width="1" height="1">
 <defs><linearGradient id="hd" x1="0" x2="1" y1="0" y2="1"><stop offset="0" stop-color="#d8d8d8"/><stop offset="1" stop-color="#a4a4a4"/></linearGradient>
 <linearGradient id="hs" x1="0" x2="1" y1="0" y2="0"><stop offset="0" stop-color="#a0a0a0"/><stop offset="0.5" stop-color="#c4c4c4"/><stop offset="1" stop-color="#909090"/></linearGradient></defs>
 <g transform="translate(758.5 921.5) rotate(30)">
  <path d="M-23 0 L-23 4.5 A23 10 0 0 0 23 4.5 L23 0 Z" fill="url(#hs)"/>
  <ellipse cx="0" cy="0" rx="23" ry="10" fill="url(#hd)" stroke="#8a8a8a" stroke-width="0.5"/>
 </g>
 <g fill="#efb93a" stroke="#1c1a10" stroke-width="1" stroke-linejoin="round">
  <path d="M769.2 891 L774.2 891 L761.8 921 L756.7 921 Z"/>
  <path d="M779.9 891 L785 891 L772.2 921 L767.4 921 Z"/>
  <path d="M758.5 899 L788 899 L788 903.4 L758.5 903.4 Z"/>
  <path d="M754.5 907.8 L784 907.8 L784 912.6 L754.5 912.6 Z"/>
 </g>
 <g fill="#efb93a">
  <path d="M769.2 891 L774.2 891 L761.8 921 L756.7 921 Z"/>
  <path d="M779.9 891 L785 891 L772.2 921 L767.4 921 Z"/>
  <path d="M758.5 899 L788 899 L788 903.4 L758.5 903.4 Z"/>
  <path d="M754.5 907.8 L784 907.8 L784 912.6 L754.5 912.6 Z"/>
 </g>
 <g transform="translate(747 896) rotate(45)">
  <rect x="-7" y="-3.3" width="13" height="6.6" fill="#e8b020" stroke="#222" stroke-width="0.7"/>
  <line x1="-7" y1="-1" x2="6" y2="-1" stroke="#8a5a00" stroke-width="0.7"/><line x1="-7" y1="1.2" x2="6" y2="1.2" stroke="#8a5a00" stroke-width="0.7"/>
  <rect x="-9.5" y="-3.3" width="2.5" height="6.6" fill="#c8c8c8"/>
  <rect x="-14" y="-3.4" width="4.8" height="6.8" rx="2.5" fill="#d07878"/>
  <path d="M6 -3.3 L12 0 L6 3.3 Z" fill="#f0e0a0" stroke="#222" stroke-width="0.5"/>
  <path d="M9.8 -1.2 L13 0 L9.8 1.2 Z" fill="#111"/>
 </g>
</svg>
<svg style="left:-1px;top:-1px" width="1" height="1">
 <defs><linearGradient id="arr" x1="0" x2="0" y1="0" y2="1"><stop offset="0" stop-color="#f8e040"/><stop offset="1" stop-color="#f0a020"/></linearGradient></defs>
 <path d="M1039.6 915.1 L1063.2 898.3 L1063.2 904.8 L1090.5 904.6 Q1097.5 904 1097.5 895 L1097.5 894.2 L1099.6 894.2 L1099.6 917.5 Q1099.6 925.8 1091.5 925.8 L1063.2 926.1 L1063.2 931.8 Z" fill="url(#arr)" stroke="#000" stroke-width="1.8" stroke-linejoin="miter"/>
</svg>
</div>
</body></html>
